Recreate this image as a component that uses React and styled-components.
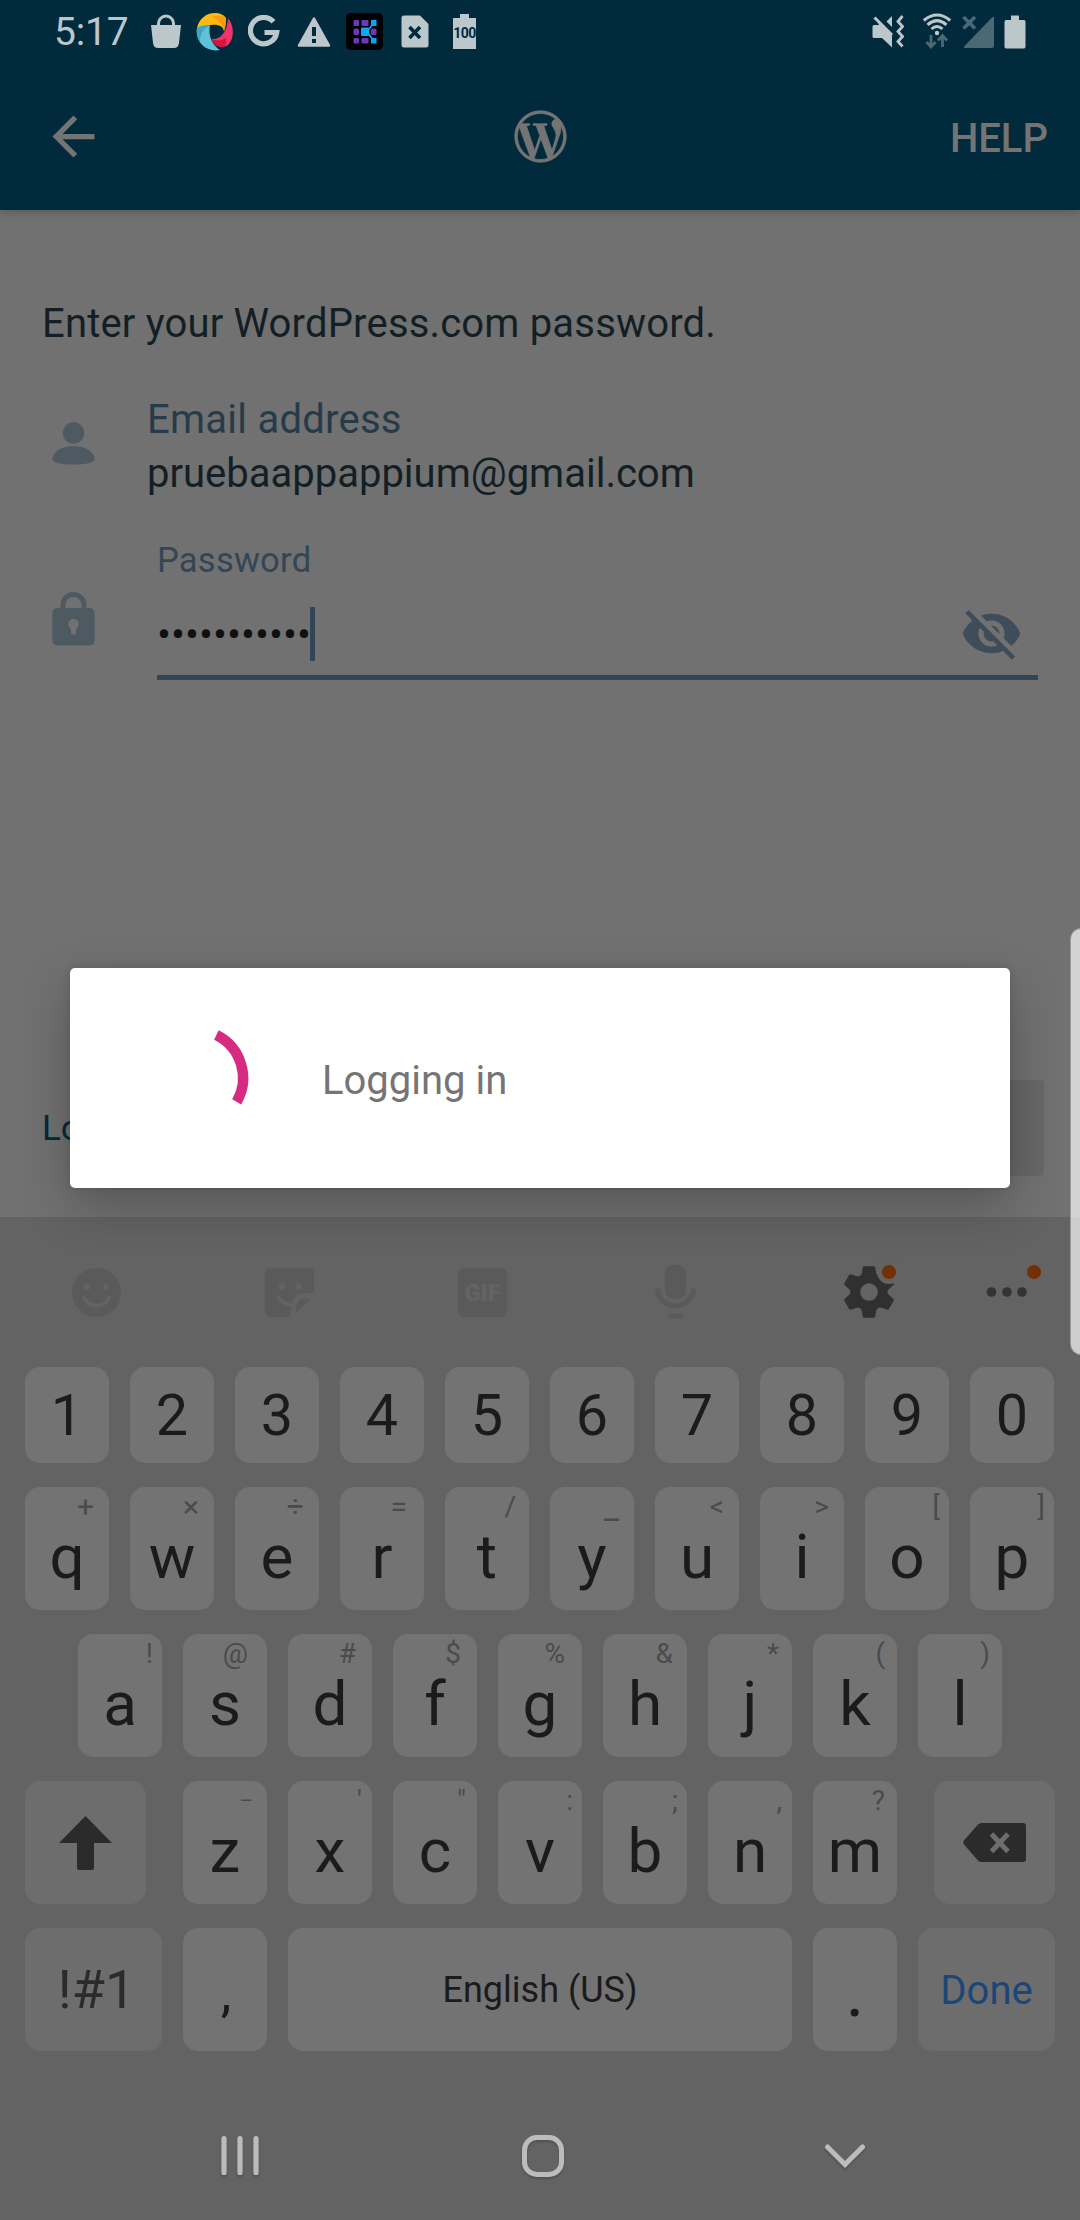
import React from "react";
import styled, { createGlobalStyle } from "styled-components";
import { MdVisibilityOff, MdArrowBack } from "react-icons/md";
import { FaWordpressSimple } from "react-icons/fa";

const c = {
  header: "#012b3c",
  body: "#717171",
  keyboard: "#636363",
  key: "#737373",
  fnKey: "#6d6d6d",
  ink: "#1b1b1b",
  fnInk: "#2b2b2b",
  hint: "#4b4b4b",
  status: "#bcc7cc",
  statusDim: "#4b6875",
  toolbarInk: "#747474",
  field: "#344655",
  muted: "#4e5a61",
  faint: "#5a5a5a",
  badge: "#733007",
  nav: "#bcbcbc",
};

const GlobalStyle = createGlobalStyle`
  * { box-sizing: border-box; }
  body { margin: 0; background: ${c.keyboard}; font-family: Roboto, "Noto Sans", sans-serif; }
  svg { display: block; flex: none; }
`;

const Screen = styled.div`
  position: relative;
  width: 1080px;
  height: 2220px;
  overflow: hidden;
  display: flex;
  flex-direction: column;
  background: ${c.body};
`;

/* ---------- header ---------- */
const Header = styled.header`
  height: 210px;
  flex: none;
  background: ${c.header};
  box-shadow: 0 2px 10px rgba(0, 0, 0, 0.22);
`;
const StatusBar = styled.div`
  height: 63px;
  display: flex;
  align-items: center;
  justify-content: space-between;
  padding: 0 54px;
`;
const StatusGroup = styled.div`
  display: flex;
  align-items: center;
`;
const StatusItem = styled.div`
  margin-left: ${(p) => p.$gap}px;
`;
const Clock = styled.span`
  width: 96px;
  font-size: 39px;
  line-height: 68px;
  letter-spacing: -0.2px;
  padding-top: 1px;
  color: ${c.status};
`;
const Toolbar = styled.div`
  height: 147px;
  display: grid;
  grid-template-columns: 1fr 60px 1fr;
  align-items: center;
  padding: 0 32px 0 42px;
`;
const ToolbarIcon = styled.div`
  display: flex;
  justify-content: ${(p) => p.$align || "center"};
  color: ${c.toolbarInk};
`;
const Logo = styled(ToolbarIcon)`
  margin-left: -9px;
  svg { overflow: visible; }
  path { stroke: currentColor; stroke-width: 8px; }
`;
const HelpLink = styled.span`
  justify-self: end;
  font-size: 40px;
  font-weight: 500;
  line-height: 50px;
  padding-top: 5px;
  color: ${c.toolbarInk};
`;

/* ---------- form ---------- */
const Main = styled.main`
  height: 1007px;
  flex: none;
  display: flex;
  flex-direction: column;
  padding: 91px 36px 41px 42px;
`;
const Heading = styled.h1`
  margin: 0 0 45px;
  font-size: 40px;
  font-weight: 400;
  line-height: 46px;
  letter-spacing: 0.18px;
  white-space: nowrap;
  color: #131f25;
`;
const FormRow = styled.div`
  display: flex;
  align-items: flex-start;
  margin-bottom: 40px;
`;
const RowIcon = styled.div`
  padding: ${(p) => p.$top}px 0 0 10px;
  width: ${(p) => p.$width}px;
  flex: none;
`;
const Lines = styled.div`
  height: 108px;
  padding-top: 1px;
`;
const Line = styled.div`
  font-size: 40px;
  line-height: 54px;
  letter-spacing: ${(p) => p.$track || 0}px;
  white-space: nowrap;
  color: ${(p) => p.$color};
`;
const Field = styled.div`
  width: 881px;
`;
const Label = styled.div`
  font-size: 34.6px;
  line-height: 40px;
  letter-spacing: 0.2px;
  color: ${c.field};
`;
const Input = styled.div`
  height: 100px;
  display: flex;
  align-items: center;
  padding: 12px 15px 0 0;
  border-bottom: 5px solid ${c.field};
`;
const Dots = styled.span`
  width: 153px;
  padding-top: 2px;
  font-size: 41.5px;
  line-height: 54px;
  white-space: nowrap;
  color: #101010;
`;
const Caret = styled.span`
  width: 5px;
  height: 54px;
  background: ${c.field};
`;
const EyeToggle = styled.span`
  margin-left: auto;
  color: #3e4d59;
`;
const ActionRow = styled.div`
  margin-top: auto;
  display: flex;
  align-items: center;
  justify-content: space-between;
`;
const LostLink = styled.span`
  padding-top: 2px;
  font-size: 35px;
  line-height: 40px;
  color: #002b3c;
`;
const NextButton = styled.div`
  width: 231px;
  height: 96px;
  border-radius: 5px;
  background: #676767;
`;

/* ---------- keyboard ---------- */
const Keyboard = styled.section`
  flex: 1;
  background: ${c.keyboard};
`;
const Tools = styled.div`
  height: 150px;
  display: grid;
  grid-template-columns: repeat(5, 193px) 83px;
  align-items: center;
  justify-items: center;
`;
const Tool = styled.div`
  position: relative;
  display: flex;
  align-items: center;
  justify-content: center;
  width: 63px;
  height: 63px;
`;
const Badge = styled.span`
  position: absolute;
  top: 4px;
  right: ${(p) => p.$right}px;
  width: 14px;
  height: 14px;
  border-radius: 50%;
  background: ${c.badge};
  box-shadow: 0 0 0 ${(p) => p.$ring || 0}px ${c.keyboard};
`;
const GifBox = styled.div`
  width: 49px;
  height: 49px;
  border-radius: 6px;
  background: ${c.faint};
  color: ${c.keyboard};
  font-size: 24px;
  font-weight: 900;
  line-height: 50px;
  text-align: center;
`;
const Rows = styled.div`
  display: flex;
  flex-direction: column;
  gap: 24px;
  padding: 0 25px;
`;
const KeyRow = styled.div`
  display: flex;
  gap: 21px;
  padding-left: ${(p) => p.$indent || 0}px;
`;
const KeyCap = styled.div`
  position: relative;
  width: ${(p) => p.$width || 84}px;
  height: ${(p) => (p.$short ? 96 : 123)}px;
  margin: 0 ${(p) => p.$mr || 0}px 0 ${(p) => p.$ml || 0}px;
  flex: none;
  display: flex;
  align-items: center;
  justify-content: center;
  border-radius: 15px;
  background: ${(p) => (p.$fn ? c.fnKey : c.key)};
`;
const KeyText = styled.span`
  font-size: ${(p) => p.$size}px;
  line-height: 60px;
  padding-top: ${(p) => p.$drop || 0}px;
  padding-left: ${(p) => p.$push || 0}px;
  white-space: nowrap;
  color: ${(p) => p.$color || c.ink};
`;
const Hint = styled.span`
  position: absolute;
  top: 4px;
  right: ${(p) => p.$right}px;
  font-size: ${(p) => p.$size || 28}px;
  line-height: 32px;
  color: ${c.hint};
`;
const NavBar = styled.nav`
  margin-top: 41px;
  height: 127px;
  display: grid;
  grid-template-columns: repeat(3, 302.5px);
  padding-left: 89px;
  align-items: center;
  justify-items: center;
  svg { filter: drop-shadow(0 2px 1px rgba(0, 0, 0, 0.18)); }
`;

/* ---------- overlays ---------- */
const Dialog = styled.div`
  position: absolute;
  left: 70px;
  top: 968px;
  width: 940px;
  height: 220px;
  display: flex;
  align-items: center;
  padding: 0 62px;
  border-radius: 5px;
  background: #fff;
  box-shadow: 0 18px 52px rgba(0, 0, 0, 0.24), 0 0 8px rgba(0, 0, 0, 0.12);
`;
const DialogText = styled.span`
  padding-top: 6px;
  margin-left: 64px;
  font-size: 40px;
  line-height: 48px;
  color: #757575;
`;
const EdgeHandle = styled.div`
  position: absolute;
  right: -12px;
  top: 928px;
  width: 22px;
  height: 427px;
  border-radius: 14px;
  background: rgba(255, 255, 255, 0.69);
  border: 1px solid #9a9a9a;
`;

/* Letter keys: character, secondary symbol, symbol's right inset, symbol size */
const rows = {
  digits: "1234567890".split(""),
  top: [
    ["q", "+", 15, 30], ["w", "×", 15, 30], ["e", "÷", 15, 30], ["r", "=", 17, 30], ["t", "/", 13],
    ["y", "_", 15, 34], ["u", "<", 15], ["i", ">", 15], ["o", "[", 9], ["p", "]", 9],
  ],
  home: [
    ["a", "!", 9], ["s", "@", 19], ["d", "#", 16], ["f", "$", 16], ["g", "%", 17],
    ["h", "&", 14], ["j", "*", 13], ["k", "(", 12], ["l", ")", 12],
  ],
  bottom: [
    ["z", "–", 14, 21], ["x", "'", 10], ["c", '"', 11], ["v", ":", 9],
    ["b", ";", 9], ["n", ",", 10], ["m", "?", 12],
  ],
};

const Letter = ({ item: [char, hint, right, size] }) => (
  <KeyCap>
    <Hint $right={right} $size={size}>{hint}</Hint>
    <KeyText $size={62} $drop={17}>{char}</KeyText>
  </KeyCap>
);

const BagIcon = () => (
  <svg width="32" height="37" viewBox="0 0 32 37">
    <path d="M1 12H31L29 30Q28.500 35 24 35H8Q3.500 35 3 30Z" fill={c.status} />
    <path d="M8.500 13V10.500A7.500 7.500 0 0 1 23.500 10.500V13" fill="none" stroke={c.status} strokeWidth="3" />
  </svg>
);
const SwirlIcon = () => (
  <svg width="38" height="38" viewBox="0 0 38 38">
    <path d="M1 15C3 6 10 0 19 0C24 0 28 2 30 5C30 10 29.500 14 28 18C27 12 20 9 1 15Z" fill="#fdb813" />
    <path d="M16 4Q25 1 30 5Q30 12 28 18Q26 8 16 4Z" fill="#f99d0a" />
    <path d="M1 15C5 12.500 9 12 14 12.500C12 21 15 31 24 37C11 39.500 -1 30 1 15Z" fill="#5fc1da" />
    <path d="M1 15C5 12.500 9 12 14 12.500C7 16 4 21 4 29C1 25 0 20 1 15Z" fill="#3fa7c2" />
    <path d="M32 5C38 12 39 25 32 32C26 36 18 33 15.500 26C24 27 31 20 32 5Z" fill="#ef346c" />
    <path d="M15.500 26Q23 29 30 25Q31 30 28 34Q18 35 15.500 26Z" fill="#d1173f" />
  </svg>
);
const GoogleIcon = () => (
  <svg width="32" height="33" viewBox="0 0 32 33">
    <path d="M25.500 6.800A13.200 13.200 0 1 0 28.700 17.500H16.500" fill="none" stroke={c.status} strokeWidth="5.200" />
  </svg>
);
const WarningIcon = () => (
  <svg width="34" height="32" viewBox="0 0 34 32">
    <path d="M17 2.500L32 29.500H2Z" fill={c.status} stroke={c.status} strokeWidth="2.500" strokeLinejoin="round" />
    <path d="M15 11h4v9h-4zM15 23h4v4h-4z" fill={c.header} />
  </svg>
);
const GridAppIcon = () => (
  <svg width="37" height="37" viewBox="0 0 37 37">
    <rect width="37" height="37" rx="5" fill="#000" />
    <g fill="#673ab7">
      <rect x="7.500" y="7" width="5.500" height="6" rx="1" />
      <rect x="15.500" y="7" width="7" height="6" rx="1" />
      <rect x="7.500" y="15.500" width="5.500" height="6.500" rx="1.500" />
      <rect x="25" y="15.500" width="5.500" height="6.500" rx="1.500" />
      <rect x="7.500" y="25" width="5.500" height="5.500" rx="1" />
      <rect x="15.500" y="25" width="7" height="5.500" rx="1" />
    </g>
    <g fill="#03a9f4">
      <rect x="15" y="14.500" width="8" height="8.500" rx="1" />
      <rect x="25" y="7" width="5.500" height="6" />
      <rect x="25" y="25" width="5.500" height="5.500" />
      <path d="M27 11L21 18.500L27 27" fill="none" stroke="#03a9f4" strokeWidth="1.800" />
    </g>
  </svg>
);
const FileIcon = () => (
  <svg width="28" height="33" viewBox="0 0 28 33">
    <path d="M3 0.500H19L27.500 9V30Q27.500 32.500 25 32.500H3Q0.500 32.500 0.500 30V3Q0.500 0.500 3 0.500Z" fill={c.status} />
    <path d="M8.500 12L19 23M19 12L8.500 23" stroke={c.header} strokeWidth="3.600" />
  </svg>
);
const Battery = styled.div`
  width: 23px;
  height: 36px;
  display: flex;
  flex-direction: column;
  align-items: center;
  &::before { content: ""; width: 9px; height: 4px; flex: none; background: ${c.status}; }
`;
const BatteryBody = styled.div`
  width: 23px;
  height: 31px;
  flex: none;
  display: flex;
  justify-content: center;
  color: ${c.header};
  font-size: 14px;
  font-weight: 700;
  line-height: 31px;
  letter-spacing: -0.6px;
  background: ${c.status};
`;
const MuteIcon = () => (
  <svg width="32" height="33" viewBox="0 0 32 33">
    <path d="M2 10H7L4 3L20 19V32.500L10 23H2Q0.500 23 0.500 21.500V11.500Q0.500 10 2 10Z" fill={c.status} />
    <path d="M2.500 2.500L20 20" stroke={c.status} strokeWidth="3" />
    <path d="M14.500 6.500L20 1V12Z" fill={c.status} />
    <path d="M30.500 1L26 6.500L30.500 11.500L26 16.500L30.500 21.500L26 26.500L30.500 31.500" fill="none" stroke={c.status} strokeWidth="2.800" />
  </svg>
);
const WifiIcon = () => (
  <svg width="30" height="37" viewBox="0 0 30 37">
    <g fill="none" stroke={c.status} strokeWidth="3">
      <path d="M1.800 7.500Q15 -3.500 28.200 7.500" />
      <path d="M5.500 11.800Q15 3.500 24.500 11.800" />
      <path d="M9.500 16Q15 11 20.500 16" />
    </g>
    <circle cx="15" cy="20" r="2.200" fill={c.status} />
    <g fill="none" stroke={c.statusDim} strokeWidth="2.800">
      <path d="M9 22V34M4.500 29L9 34L13.500 29" />
      <path d="M20.500 34V23M16 27.500L20.500 22.500L25 27.500" />
    </g>
  </svg>
);
const SignalIcon = () => (
  <svg width="33" height="34" viewBox="0 0 33 34">
    <path d="M32 2V31Q32 33 30 33H3Q1 33 3 30.500L30 2.500Q31 1.500 32 2Z" fill={c.statusDim} />
    <path d="M1.500 2L13 13.500M13 2L1.500 13.500" stroke={c.statusDim} strokeWidth="3.600" />
  </svg>
);
const FullBatteryIcon = () => (
  <svg width="22" height="34" viewBox="0 0 22 34">
    <path d="M7 0.500H15V5H20Q21.500 5 21.500 7V31.500Q21.500 33.500 20 33.500H2Q0.500 33.500 0.500 31.500V7Q0.500 5 2 5H7Z" fill={c.status} />
  </svg>
);
const PersonIcon = () => (
  <svg width="43" height="43" viewBox="0 0 43 43" fill={c.muted}>
    <circle cx="21.500" cy="11" r="10.700" />
    <path d="M0.300 37C1 29 11 24 21.500 24S42 29 42.700 37C43 40.500 34 42.500 21.500 42.500S0 40.500 0.300 37Z" />
  </svg>
);
const LockIcon = () => (
  <svg width="43" height="54" viewBox="0 0 43 54">
    <path d="M11 18V13A10.500 10.500 0 0 1 32 13V18" fill="none" stroke={c.muted} strokeWidth="5" />
    <rect x="0.300" y="16" width="42.400" height="37.500" rx="5" fill={c.muted} />
    <circle cx="21.500" cy="32" r="5.300" fill={c.body} />
    <rect x="19" y="34" width="5" height="8.500" fill={c.body} />
  </svg>
);
const SmileIcon = () => (
  <svg width="49" height="49" viewBox="0 0 49 49">
    <circle cx="24.500" cy="24.500" r="24.500" fill={c.faint} />
    <circle cx="15.200" cy="19" r="3" fill={c.keyboard} />
    <circle cx="34" cy="19" r="3" fill={c.keyboard} />
    <path d="M12 29.500C16 40.500 33 40.500 37 29.500" fill="none" stroke={c.keyboard} strokeWidth="4" strokeLinecap="round" />
  </svg>
);
const StickerIcon = () => (
  <svg width="49" height="49" viewBox="0 0 49 49">
    <path d="M6 0H43Q49 0 49 6V25H40Q26 26 26 40L25 49H6Q0 49 0 43V6Q0 0 6 0Z" fill={c.faint} />
    <path d="M31 45V42Q31 31 41 31H45.500Z" fill={c.faint} />
    <circle cx="17" cy="18.300" r="3.200" fill={c.keyboard} />
    <circle cx="33.300" cy="18.300" r="3.200" fill={c.keyboard} />
    <path d="M13 29.500Q19 37.500 28.500 36" fill="none" stroke={c.keyboard} strokeWidth="4" strokeLinecap="round" />
  </svg>
);
const MicIcon = () => (
  <svg width="41" height="54" viewBox="0 0 41 54">
    <rect x="10" y="0" width="21" height="34" rx="8.500" fill={c.faint} />
    <path d="M2.700 23.500C3 34 11 41 20.500 41S38 34 38.300 23.500" fill="none" stroke={c.faint} strokeWidth="5.200" />
    <rect x="12.500" y="48.500" width="16" height="5" rx="1" fill={c.faint} />
  </svg>
);
const GearIcon = () => (
  <svg width="50" height="52" viewBox="-25 -26 50 52">
    <g fill="#303030">
      <circle r="18.500" />
      {[0, 60, 120, 180, 240, 300].map((a) => (
        <path key={a} transform={`rotate(${a})`} d="M-11 -14Q-7 -16 -6.500 -23L-6 -25Q-5.500 -25.700 -4.500 -25.700H4.500Q5.500 -25.700 6 -25L6.500 -23Q7 -16 11 -14Z" />
      ))}
    </g>
    <circle r="8.800" fill={c.keyboard} />
  </svg>
);
const MoreIcon = () => (
  <svg width="42" height="12" viewBox="0 0 42 12" fill="#343434">
    <circle cx="5.500" cy="6" r="4.800" /><circle cx="21" cy="6" r="4.800" /><circle cx="36" cy="6" r="4.800" />
  </svg>
);
const ShiftIcon = () => (
  <svg width="53" height="54" viewBox="0 0 53 54">
    <path d="M26.500 0L53 27H35V52Q35 54 33 54H20Q18 54 18 52V27H0Z" fill={c.fnInk} />
  </svg>
);
const BackspaceIcon = () => (
  <svg width="63" height="39" viewBox="0 0 63 39">
    <path d="M18.500 0H60Q63 0 63 3V36Q63 39 60 39H18.500Q16.500 39 15 37.500L1 21.500Q-0.500 19.500 1 17.500L15 1.500Q16.500 0 18.500 0Z" fill={c.fnInk} />
    <path d="M28.500 11L45 28.500M45 11L28.500 28.500" stroke={c.fnKey} strokeWidth="5" />
  </svg>
);
const RecentsIcon = () => (
  <svg width="40" height="42" viewBox="0 0 40 42" stroke={c.nav} strokeWidth="5.200" strokeLinecap="round">
    <path d="M4 3.500V37.500M20 3.500V37.500M36 3.500V37.500" />
  </svg>
);
const HomeIcon = () => (
  <svg width="44" height="44" viewBox="0 0 44 44">
    <rect x="3.500" y="3.500" width="37" height="37" rx="12.500" fill="none" stroke={c.nav} strokeWidth="5" />
  </svg>
);
const HideIcon = () => (
  <svg width="42" height="26" viewBox="0 0 42 26">
    <path d="M3.500 4L21 21.500L38.500 4" fill="none" stroke={c.nav} strokeWidth="5" strokeLinecap="round" />
  </svg>
);
const Spinner = () => (
  <svg width="126" height="126" viewBox="0 0 126 126">
    <path d="M84.400 20A48 48 0 0 1 104.700 86.900" fill="none" stroke="#d52c82" strokeWidth="10.400" />
  </svg>
);

export default function App() {
  return (
    <Screen>
      <GlobalStyle />
      <Header>
        <StatusBar>
          <StatusGroup>
            <Clock>5:17</Clock>
            <StatusItem $gap={0}><BagIcon /></StatusItem>
            <StatusItem $gap={14}><SwirlIcon /></StatusItem>
            <StatusItem $gap={14}><GoogleIcon /></StatusItem>
            <StatusItem $gap={17}><WarningIcon /></StatusItem>
            <StatusItem $gap={15}><GridAppIcon /></StatusItem>
            <StatusItem $gap={18}><FileIcon /></StatusItem>
            <StatusItem $gap={24}><Battery><BatteryBody>100</BatteryBody></Battery></StatusItem>
          </StatusGroup>
          <StatusGroup>
            <MuteIcon />
            <StatusItem $gap={18}><WifiIcon /></StatusItem>
            <StatusItem $gap={10}><SignalIcon /></StatusItem>
            <StatusItem $gap={9}><FullBatteryIcon /></StatusItem>
          </StatusGroup>
        </StatusBar>
        <Toolbar>
          <ToolbarIcon $align="flex-start"><MdArrowBack size={63} /></ToolbarIcon>
          <Logo><FaWordpressSimple size={53} /></Logo>
          <HelpLink>HELP</HelpLink>
        </Toolbar>
      </Header>

      <Main>
        <Heading>Enter your WordPress.com password.</Heading>
        <FormRow>
          <RowIcon $top={30} $width={105}><PersonIcon /></RowIcon>
          <Lines>
            <Line $color="#263b49" $track={0.25}>Email address</Line>
            <Line $color="#131f25">pruebaappappium@gmail.com</Line>
          </Lines>
        </FormRow>
        <FormRow>
          <RowIcon $top={52} $width={115}><LockIcon /></RowIcon>
          <Field>
            <Label>Password</Label>
            <Input>
              <Dots>•••••••••••</Dots>
              <Caret />
              <EyeToggle><MdVisibilityOff size={63} /></EyeToggle>
            </Input>
          </Field>
        </FormRow>
        <ActionRow>
          <LostLink>Lost your password?</LostLink>
          <NextButton />
        </ActionRow>
      </Main>

      <Keyboard>
        <Tools>
          <Tool><SmileIcon /></Tool>
          <Tool><StickerIcon /></Tool>
          <Tool><GifBox>GIF</GifBox></Tool>
          <Tool><MicIcon /></Tool>
          <Tool><GearIcon /><Badge $right={4} $ring={5} /></Tool>
          <Tool><MoreIcon /><Badge $right={-3} /></Tool>
        </Tools>
        <Rows>
          <KeyRow>
            {rows.digits.map((d) => (
              <KeyCap key={d} $short><KeyText $size={57.5} $drop={2}>{d}</KeyText></KeyCap>
            ))}
          </KeyRow>
          <KeyRow>{rows.top.map((k) => <Letter key={k[0]} item={k} />)}</KeyRow>
          <KeyRow $indent={53}>{rows.home.map((k) => <Letter key={k[0]} item={k} />)}</KeyRow>
          <KeyRow>
            <KeyCap $fn $width={121} $mr={16}><ShiftIcon /></KeyCap>
            {rows.bottom.map((k) => <Letter key={k[0]} item={k} />)}
            <KeyCap $fn $width={121} $ml={16}><BackspaceIcon /></KeyCap>
          </KeyRow>
          <KeyRow>
            <KeyCap $fn $width={137}><KeyText $size={54} $push={6} $color={c.fnInk}>!#1</KeyText></KeyCap>
            <KeyCap><KeyText $size={54} $drop={7} $push={2}>,</KeyText></KeyCap>
            <KeyCap $width={504}><KeyText $size={36}>English (US)</KeyText></KeyCap>
            <KeyCap><KeyText $size={72} $drop={5}>.</KeyText></KeyCap>
            <KeyCap $fn $width={137}><KeyText $size={40} $drop={2} $color="#1c4677">Done</KeyText></KeyCap>
          </KeyRow>
        </Rows>
        <NavBar>
          <RecentsIcon />
          <HomeIcon />
          <HideIcon />
        </NavBar>
      </Keyboard>

      <Dialog>
        <Spinner />
        <DialogText>Logging in</DialogText>
      </Dialog>
      <EdgeHandle />
    </Screen>
  );
}
